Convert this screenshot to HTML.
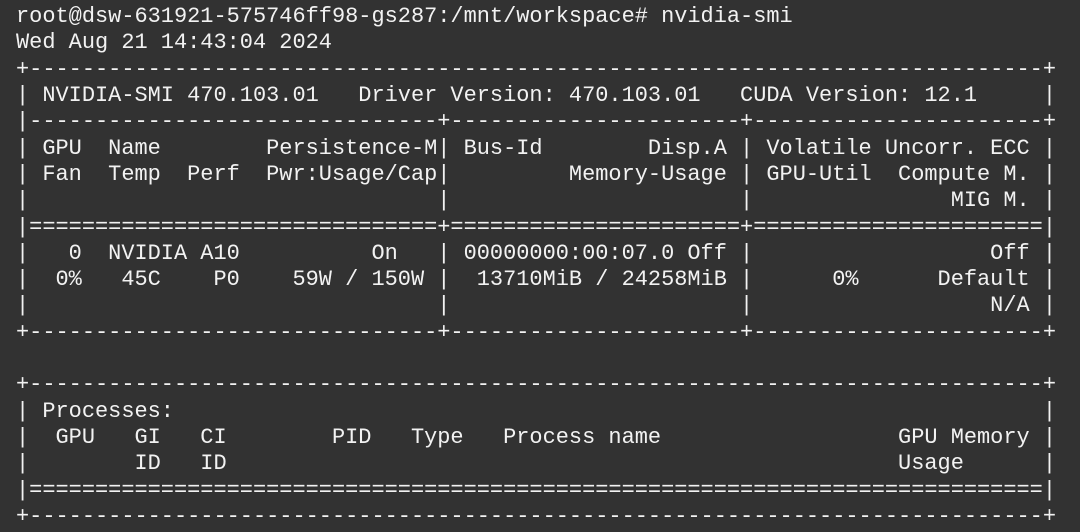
<!DOCTYPE html>
<html><head><meta charset="utf-8"><style>
html,body{margin:0;padding:0;background:#323232;width:1080px;height:532px;overflow:hidden}
pre{margin:0;padding:4px 0 0 16px;font-family:"Liberation Mono",monospace;font-size:21.95px;line-height:26.32px;color:#f2f2f2;white-space:pre}
</style></head><body><pre>root@dsw-631921-575746ff98-gs287:/mnt/workspace# nvidia-smi
Wed Aug 21 14:43:04 2024
+-----------------------------------------------------------------------------+
| NVIDIA-SMI 470.103.01   Driver Version: 470.103.01   CUDA Version: 12.1     |
|-------------------------------+----------------------+----------------------+
| GPU  Name        Persistence-M| Bus-Id        Disp.A | Volatile Uncorr. ECC |
| Fan  Temp  Perf  Pwr:Usage/Cap|         Memory-Usage | GPU-Util  Compute M. |
|                               |                      |               MIG M. |
|===============================+======================+======================|
|   0  NVIDIA A10          On   | 00000000:00:07.0 Off |                  Off |
|  0%   45C    P0    59W / 150W |  13710MiB / 24258MiB |      0%      Default |
|                               |                      |                  N/A |
+-------------------------------+----------------------+----------------------+

+-----------------------------------------------------------------------------+
| Processes:                                                                  |
|  GPU   GI   CI        PID   Type   Process name                  GPU Memory |
|        ID   ID                                                   Usage      |
|=============================================================================|
+-----------------------------------------------------------------------------+</pre></body></html>
